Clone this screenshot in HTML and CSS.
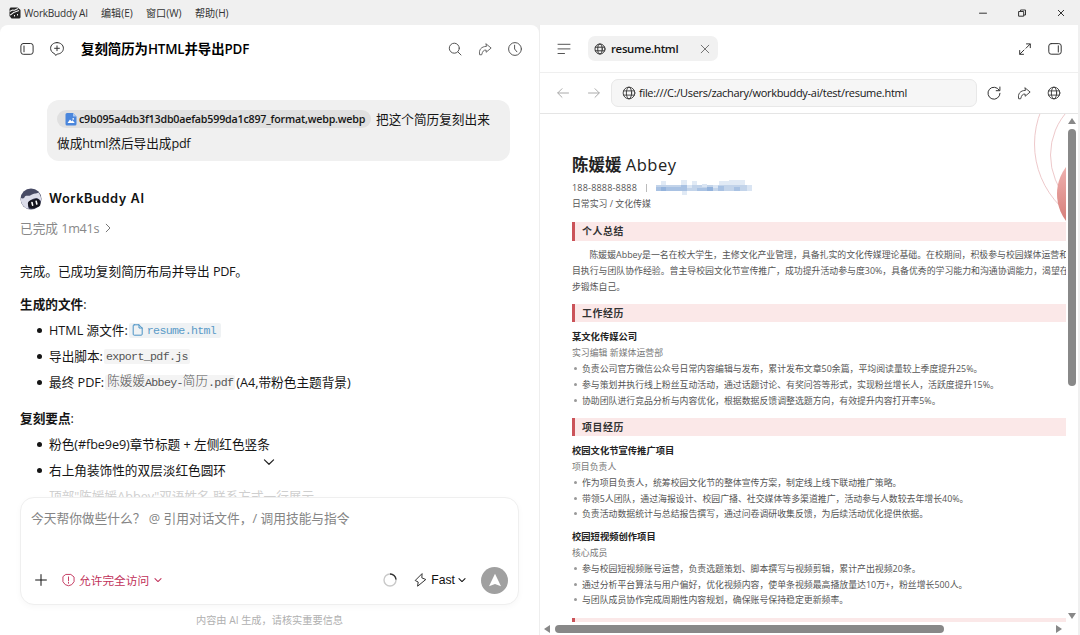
FILE: index.html
```html
<!DOCTYPE html>
<html lang="zh-CN">
<head>
<meta charset="utf-8">
<title>WorkBuddy AI</title>
<link rel="stylesheet" href="styles.css">
</head>
<body>
<svg width="0" height="0" class="defs">
  <symbol id="globe" viewBox="0 0 16 16"><circle cx="8" cy="8" r="6.7"/><ellipse cx="8" cy="8" rx="3" ry="6.7"/><path d="M1.8 5.6h12.4M1.8 10.4h12.4"/></symbol>
  <symbol id="share" viewBox="0 0 16 16"><path d="M9.3 2.2 15 6.900 9.3 11.700V9.2C6.2 9 5.200 10.800 4.200 14.600H1.900C.7 8.700 3.800 5.200 9.300 5z"/></symbol>
  <symbol id="down" viewBox="0 0 10 10"><path d="M1.200 3.200 5 6.900 8.800 3.200"/></symbol>
</svg>
<header class="titlebar">
  <svg class="logo" viewBox="0 0 12 12"><path d="M1.500.5h7L11.500 3v7.500l-1 1h-8L.5 9V2z" fill="#222"/><path d="M.7 4.500 3.500 3l2 .3L9 1.500M1 8c2-.2 2.500-2.500 5-3l4-1.500" stroke="#f0f0f0" stroke-width="1.100" fill="none"/><path d="M5.500 8v1.500M8.500 7v1.500" stroke="#f0f0f0" fill="none"/></svg>
  <span class="menu m1">WorkBuddy AI</span><span class="menu m2">编辑(E)</span><span class="menu m3">窗口(W)</span><span class="menu m4">帮助(H)</span>
  <span class="wincontrols">
    <svg class="ic" viewBox="0 0 10 10"><path d="M1.500 5.200h7"/></svg>
    <svg class="ic" viewBox="0 0 10 10"><path d="M2 3.500h4.700v4.700H2zM3.500 3.300V2h5v5H7"/></svg>
    <svg class="ic" viewBox="0 0 10 10"><path d="m2.300 2.300 5.400 5.400m0-5.400L2.300 7.700"/></svg>
  </span>
</header>
<div class="panes">
<section class="chat">
  <div class="chat-head">
    <svg class="ic i14" viewBox="0 0 14 14"><rect x=".9" y="1.500" width="12.200" height="10.800" rx="2.400"/><path d="M4 4v5.800"/></svg>
    <svg class="ic i14 new" viewBox="0 0 14 14"><path d="M7 .6c3.600 0 6.400 2.400 6.400 5.700S10.600 12 7.300 12L5.800 13.500 4.500 11.600C2.200 10.800.6 8.800.6 6.300.6 3 3.400.6 7 .6zM7 3.900v4.800M4.600 6.300h4.800"/></svg>
    <h1>复刻简历为<span>HTML</span>并导出<span>PDF</span></h1>
    <div class="head-actions">
      <svg class="ic i14 mid" viewBox="0 0 14 14"><circle cx="6.300" cy="6.200" r="5"/><path d="m10 10 3 3"/></svg>
      <svg class="ic i14 mid"><use href="#share"/></svg>
      <svg class="ic i14 mid" viewBox="0 0 14 14"><circle cx="7" cy="7" r="6.400"/><path d="M6.600 3.200V7l2.300 2.800"/></svg>
    </div>
  </div>
  <div class="bubble">
    <div class="bline"><span class="chip"><svg viewBox="0 0 12 13"><path d="M2 0h6l3.500 3.500V11a1.500 1.500 0 0 1-1.500 1.500H2A1.500 1.500 0 0 1 .5 11V1.500A1.500 1.500 0 0 1 2 0z" fill="#4a86dc"/><path d="M8 0v3.500h3.500z" fill="#a9c8f2"/><path d="M2.500 10 5 6.500l1.600 1.800 1-1L9.700 10z" fill="#fff"/><circle cx="8.200" cy="5.900" r=".8" fill="#fff"/></svg><b>c9b095a4db3f13db0aefab599da1c897_format,webp.webp</b></span><span>把这个简历复刻出来</span></div>
    <div class="bline">做成<span class="lat">html</span>然后导出成<span class="lat">pdf</span></div>
  </div>
  <div class="author">
    <svg viewBox="0 0 22 22"><circle cx="11" cy="11" r="10.500" fill="#484b65"/><path d="M.7 10c1.500 0 3 1.500 4.200-1.500C6.500 7 9 8.500 11 7c3-2 5-1 7.500-2.500 2 2.500 3 5 2.500 8.500-2-2-4-4-7-2.500-3.500 1-5.500 3-6 6-.2 1.500.2 3 .8 4.500C4 20 .5 15.500.7 10z" fill="#dcddea"/><rect x="8" y="11.500" width="12.500" height="8.500" rx="4" transform="rotate(-15 14 16)" fill="#15151f"/><path d="m12 14.500.6 2.600M16.200 13.400l.6 2.600" stroke="#fff" stroke-width="1.600" stroke-linecap="round"/></svg>
    <b>WorkBuddy AI</b>
  </div>
  <div class="status"><span>已完成 <span class="lat">1m41s</span></span><svg class="ic" viewBox="0 0 10 10"><path d="M3.200 1.200 7 5 3.200 8.800"/></svg></div>
  <div class="answer">
    <p class="lead">完成。已成功复刻简历布局并导出 <span class="lat">PDF</span>。</p>
    <p class="sub"><b>生成的文件</b>:</p>
    <ul>
      <li>HTML 源文件:<code class="link"><svg class="ic" viewBox="0 0 12 12"><path d="M2.200.8h4.800l3.200 3.200v6.200a1 1 0 0 1-1 1h-7a1 1 0 0 1-1-1V1.800a1 1 0 0 1 1-1zM7 .8V4h3.200"/></svg><i>resume.html</i></code></li>
      <li>导出脚本:<code>export_pdf.js</code></li>
      <li>最终 PDF:<code><i class="han">陈媛媛</i>Abbey-<i class="han">简历</i>.pdf</code>(A4,带粉色主题背景)</li>
    </ul>
    <p class="sub second"><b>复刻要点</b>:</p>
    <ul>
      <li>粉色<i class="hex">(#fbe9e9)</i>章节标题 + 左侧红色竖条</li>
      <li>右上角装饰性的双层淡红色圆环</li>
      <li class="faded">顶部"陈媛媛Abbey"双语姓名,联系方式一行展示</li>
    </ul>
    <svg class="ic jump" viewBox="0 0 10 10"><use href="#down"/></svg>
  </div>
  <div class="composer">
    <div class="prompt">今天帮你做些什么？ @ 引用对话文件，/ 调用技能与指令</div>
    <div class="tools">
      <svg class="ic plus" viewBox="0 0 12 12"><path d="M6 .6v10.800M.6 6h10.800"/></svg>
      <span class="access"><svg class="ic" viewBox="0 0 14 14"><path d="M4.500 1h5L13 3.800v5L10.500 12 7 13.200 3.500 12 1 8.800v-5zM7 3.700v4M7 9.300v1.200"/></svg>允许完全访问<svg class="ic dn"><use href="#down"/></svg></span>
      <svg class="spinner" viewBox="0 0 14 14"><circle cx="7" cy="7" r="6" stroke="#c9c9c9"/><path d="M7 1a6 6 0 0 1 6 5.500" stroke="#333"/></svg>
      <span class="fast"><svg class="ic" viewBox="0 0 13 14"><path d="M7.800.9 1.200 7.500 4.200 9l-.6 4.200L11.800 6.500 8.200 5z"/></svg>Fast<svg class="ic dn"><use href="#down"/></svg></span>
      <span class="send"><svg viewBox="0 0 14 14"><path d="M7 .8 13 13.200 7 11 1 13.200z"/></svg></span>
    </div>
  </div>
  <div class="notice">内容由 AI 生成，请核实重要信息</div>
</section>
<section class="viewer">
  <div class="tabs">
    <svg class="ic list" viewBox="0 0 14 14"><path d="M1 2.300h12M1 6.900h12M1 11.500h6.500"/></svg>
    <div class="tab"><svg class="ic"><use href="#globe"/></svg><b>resume.html</b><svg class="ic x" viewBox="0 0 10 10"><path d="m1.200 1.200 7.600 7.600m0-7.600L1.200 8.800"/></svg></div>
    <svg class="ic i14 grow" viewBox="0 0 14 14"><path d="M8.500 1.900h3.800v3.800M12.100 2.100 8 6.200M5.500 12.300H1.700V8.500M1.900 12.100 6 8"/></svg>
    <svg class="ic i14" viewBox="0 0 14 14"><rect x=".8" y="1.600" width="12.400" height="10.600" rx="2.400"/><path d="M10.300 3.800v6.200"/></svg>
  </div>
  <div class="address">
    <svg class="ic nav" viewBox="0 0 12 12"><path d="M11.500 6H.9M5 1.700.7 6 5 10.300"/></svg>
    <svg class="ic nav" viewBox="0 0 12 12"><path d="M.5 6h10.600M7 1.700 11.300 6 7 10.300"/></svg>
    <div class="url"><svg class="ic"><use href="#globe"/></svg><span>file:///C:/Users/zachary/workbuddy-ai/test/resume.html</span></div>
    <svg class="ic i14" viewBox="0 0 14 14"><path d="M12.200 4.200A6 6 0 1 0 13 7.300M12.900 1v3.700H9.200"/></svg>
    <svg class="ic i14"><use href="#share"/></svg>
    <svg class="ic i14"><use href="#globe"/></svg>
  </div>
  <div class="frame">
    <article class="resume">
      <h2><b>陈媛媛</b> <span>Abbey</span></h2>
      <div class="contact"><span>188-8888-8888</span><i></i>
        <svg class="mosaic" viewBox="0 0 97 16" shape-rendering="crispEdges"><path fill="#c3d4ea" d="M0 5h92v6H0z"/><path fill="#e1eaf5" d="M5 1h5v4H5zM25 0h6v5h-6zM36 1h5v4h-5zM63 1h10v4H63zM73 0h16v5H73zM26 11h5v4h-5z"/><path fill="#94b3dc" d="M5 7h5v4H5zM51 7h6v4h-6z"/><path fill="#a9c2e3" d="M0 7h5v4H0zM10 7h15v4H10zM25 5h6v6h-6zM41 8h10v3H41zM62 6h6v5h-6zM78 7h6v4h-6z"/><path fill="#dae5f3" d="M31 5h5v3h-5zM46 4h5v3h-5zM57 5h5v3h-5zM91 5h5v6h-5z"/></svg>
      </div>
      <div class="role">日常实习 / 文化传媒</div>
      <h3 class="first">个人总结</h3>
      <p class="about"><span class="indent"></span>陈媛媛Abbey是一名在校大学生，主修文化产业管理，具备扎实的文化传媒理论基础。在校期间，积极参与校园媒体运营和项<br>目执行与团队协作经验。曾主导校园文化节宣传推广，成功提升活动参与度30%，具备优秀的学习能力和沟通协调能力，渴望在新<br>步锻炼自己。</p>
      <h3>工作经历</h3>
      <h4>某文化传媒公司</h4>
      <div class="pos">实习编辑 新媒体运营部</div>
      <ul>
        <li>负责公司官方微信公众号日常内容编辑与发布，累计发布文章50余篇，平均阅读量较上季度提升25%。</li>
        <li>参与策划并执行线上粉丝互动活动，通过话题讨论、有奖问答等形式，实现粉丝增长人，活跃度提升15%。</li>
        <li>协助团队进行竞品分析与内容优化，根据数据反馈调整选题方向，有效提升内容打开率5%。</li>
      </ul>
      <h3>项目经历</h3>
      <h4>校园文化节宣传推广项目</h4>
      <div class="pos">项目负责人</div>
      <ul>
        <li>作为项目负责人，统筹校园文化节的整体宣传方案，制定线上线下联动推广策略。</li>
        <li>带领5人团队，通过海报设计、校园广播、社交媒体等多渠道推广，活动参与人数较去年增长40%。</li>
        <li>负责活动数据统计与总结报告撰写，通过问卷调研收集反馈，为后续活动优化提供依据。</li>
      </ul>
      <h4>校园短视频创作项目</h4>
      <div class="pos">核心成员</div>
      <ul>
        <li>参与校园短视频账号运营，负责选题策划、脚本撰写与视频剪辑，累计产出视频20条。</li>
        <li>通过分析平台算法与用户偏好，优化视频内容，使单条视频最高播放量达10万+，粉丝增长500人。</li>
        <li>与团队成员协作完成周期性内容规划，确保账号保持稳定更新频率。</li>
      </ul>
      <h3></h3>
      <svg class="rings" viewBox="0 0 34 110"><defs><linearGradient id="g" x2="0" y2="1"><stop offset=".2" stop-color="#eeb0ae"/><stop offset=".8" stop-color="#d67f7a"/></linearGradient></defs><g fill="none" stroke="#eec9cb"><circle cx="90.500" cy="30" r="88"/><circle cx="83.500" cy="41" r="65"/></g><circle cx="70" cy="80" r="45" fill="url(#g)"/></svg>
    </article>
    <div class="vbar"><svg viewBox="0 0 10 8"><path d="M5 1 9 7H1z"/></svg><i></i><svg class="end" viewBox="0 0 10 8"><path d="M5 7 1 1h8z"/></svg></div>
    <div class="hbar"><svg viewBox="0 0 8 10"><path d="M1 5 7 1v8z"/></svg><i></i><svg class="end" viewBox="0 0 8 10"><path d="M7 5 1 1v8z"/></svg></div>
  </div>
</section>
</div>
</body>
</html>
```
FILE: styles.css
```css
* { box-sizing: border-box; margin: 0; padding: 0; }
body { width: 1080px; height: 635px; overflow: hidden; background: #f0f0f0; color: #151515; font: 12.65px/26px "Open Sans", "Noto Sans CJK SC", sans-serif; display: flex; flex-direction: column; white-space: nowrap; }
svg { display: block; flex: none; }
i { font-style: normal; }
ul { list-style: none; }
.defs { position: absolute; }
.ic { fill: none; stroke: #333; stroke-width: 1; stroke-linecap: round; stroke-linejoin: round; }
.i14 { width: 14px; height: 14px; }
.lat { letter-spacing: -.3px; }

.titlebar { height: 25px; flex: none; display: flex; align-items: center; padding: 0 14px 0 9px; font-size: 10.1px; color: #333; }
.logo { width: 12px; height: 12px; margin-right: 3px; }
.menu { line-height: 22px; }
.m1 { width: 77px; letter-spacing: -.25px; }
.m2 { width: 45px; }
.m3 { width: 49px; }
.wincontrols { margin-left: auto; display: flex; gap: 29px; }
.wincontrols svg { width: 10px; height: 10px; }

.panes { flex: 1; min-height: 0; display: flex; }
.chat { width: 539px; background: #fff; border-radius: 8px 8px 0 0; display: flex; flex-direction: column; }
.chat-head { height: 48px; flex: none; display: flex; align-items: center; padding: 0 17px 0 20px; }
.chat-head .new { margin-left: 16px; }
.chat-head h1 { font-size: 13.4px; font-weight: 600; margin-left: 17px; color: #000; }
.chat-head h1 span { letter-spacing: -.2px; }
.head-actions { display: flex; gap: 16px; margin-left: auto; }
.mid { stroke: #555; }
.bubble { width: 463px; height: 61px; flex: none; margin: 27px 0 0 47px; border-radius: 12px; background: #f0f0f0; padding: 7px 10px; }
.bline { height: 24px; line-height: 24px; display: flex; align-items: center; }
.chip { width: 314px; height: 18px; border-radius: 9px; background: #e0e0e0; display: flex; align-items: center; padding-left: 8px; margin-right: 5px; line-height: 17px; }
.chip svg { width: 12px; height: 13px; margin-right: 2px; }
.chip b { font-size: 10.7px; font-weight: 600; letter-spacing: -.2px; }
.author { display: flex; align-items: center; height: 22px; flex: none; margin: 27px 0 0 20px; gap: 7px; }
.author svg { width: 22px; height: 22px; }
.author b { font: 600 12.800px/22px Inter, sans-serif; letter-spacing: .57px; color: #111; }
.status { display: flex; align-items: center; gap: 4px; height: 20px; line-height: 20px; flex: none; margin: 8px 0 0 20px; color: #888; }
.status svg { width: 10px; height: 10px; stroke: #777; }

.answer { position: relative; height: 259px; flex: none; overflow: hidden; padding: 20px 0 0 20px; }
.lead { margin-bottom: 7px; }
.sub b { font-weight: 700; }
.sub.second { margin-top: 10px; }
.answer li { height: 26px; padding-left: 29px; position: relative; display: flex; align-items: center; }
.answer li::before { content: ""; position: absolute; left: 17px; top: 11px; width: 5px; height: 5px; border-radius: 50%; background: #151515; }
.hex { letter-spacing: -.1px; }
.answer code { font: 11.600px/15px "Liberation Mono", "Noto Sans CJK SC", monospace; background: #f4f4f4; color: #555; height: 15px; padding: 0 2px; border-radius: 2px; display: flex; align-items: center; letter-spacing: -.65px; margin: 0 1px; }
.answer code .han { font-size: 12.600px; font-weight: 300; letter-spacing: 0; }
.answer code.link { color: #5a9bc8; background: #eff2f4; padding: 0 5px 0 3px; }
.link svg { width: 12px; height: 12px; stroke: #4b93c6; margin-right: 3px; }
.answer .faded { color: #cfcfcf; }
.answer .faded::before { display: none; }
.jump { position: absolute; left: 263px; top: 218px; width: 12px; height: 12px; stroke: #222; }

.composer { width: 499px; height: 108px; flex: none; margin-left: 20px; border: 1px solid #efefef; border-radius: 14px; background: #fff; box-shadow: 0 2px 6px rgba(0,0,0,.03); padding: 8px 10px 10px; display: flex; flex-direction: column; justify-content: space-between; }
.prompt { color: #858585; line-height: 24px; font-size: 12.720px; }
.tools { display: flex; align-items: center; height: 28px; }
.plus { width: 12px; height: 12px; margin: 0 15px 0 4px; stroke: #111; }
.access { display: flex; align-items: center; color: #c1315a; font-size: 11.700px; margin-right: auto; }
.access svg { width: 13px; height: 14px; stroke: #c1315a; margin-right: 4px; }
.tools .dn { width: 8px; height: 8px; margin: 0 0 0 5px; stroke-width: 1.300; }
.spinner { width: 14px; height: 14px; fill: none; stroke-width: 1.400; margin-right: 17px; }
.fast { display: flex; align-items: center; font: 12.200px/20px "Liberation Sans", sans-serif; color: #111; margin-right: 15px; }
.fast svg { width: 13px; height: 14px; margin-right: 4px; }
.tools .fast .dn { margin-left: 3px; stroke: #111; }
.send { width: 27px; height: 27px; border-radius: 50%; background: #a0a0a0; display: flex; align-items: center; justify-content: center; }
.send svg { width: 14px; height: 14px; fill: #fff; }
.notice { text-align: center; color: #b0b0b0; font-size: 10.200px; line-height: 30px; }

.viewer { width: 539px; border-left: 1px solid #eee; background: #fff; display: flex; flex-direction: column; }
.tabs { height: 48px; flex: none; display: flex; align-items: center; padding: 0 16px 0 17px; border-bottom: 1px solid #efefef; }
.list { width: 14px; height: 14px; stroke: #555; }
.tab { width: 130px; height: 25px; border-radius: 7px; background: #f1f1f1; margin-left: 17px; display: flex; align-items: center; padding: 0 8px 0 6px; }
.tab svg { width: 12px; height: 12px; stroke-width: 1.300; margin-right: 5px; }
.tab b { font: 600 11.400px/24px "Open Sans", sans-serif; letter-spacing: -.3px; }
.tab .x { width: 10px; height: 10px; margin: 0 0 0 auto; stroke: #666; stroke-width: .9; }
.grow { margin-left: auto; margin-right: 16px; }
.address { height: 41px; flex: none; display: flex; align-items: center; padding: 0 16px 0 17px; border-bottom: 1px solid #e5e5e5; }
.address .nav { width: 12px; height: 12px; stroke: #aaa; margin-right: 19px; }
.address .nav + .nav { margin-right: 11px; }
.url { width: 366px; height: 28px; border-radius: 7px; border: 1px solid #e8e8e8; background: #f6f6f6; display: flex; align-items: center; font-size: 11px; letter-spacing: -.3px; padding-left: 10px; margin-right: 10px; gap: 3px; }
.url svg { width: 14px; height: 14px; }
.address .i14 + .i14 { margin-left: 16px; }

.frame { flex: 1; min-height: 0; display: grid; grid-template: 508px 13px / 526px 12px; }
.resume { position: relative; overflow: hidden; padding: 38px 0 0 32px; font-size: 8.900px; line-height: 15.600px; color: #555; }
.resume h2 { font-size: 16.500px; line-height: 26px; height: 26px; font-weight: 400; color: #222; }
.resume h2 b { font-weight: 700; }
.resume h2 span { letter-spacing: .5px; }
.contact { display: flex; align-items: center; height: 16px; margin-top: 2px; font-size: 9px; letter-spacing: .2px; }
.contact i { width: 1px; height: 8px; background: #bbb; margin: 0 9px 0 9px; }
.mosaic { width: 97px; height: 16px; }
.rings { position: absolute; right: 0; top: 0; width: 34px; height: 110px; }
.resume h3 { height: 18.400px; line-height: 19.500px; border-left: 3px solid #cb5359; background: #fbe8e8; padding-left: 7px; font-size: 9.900px; letter-spacing: .6px; color: #333; margin-top: 9.700px; }
.resume h3.first { margin-top: 10.600px; }
.about { margin-top: 6.800px; }
.indent { display: inline-block; width: 17.500px; }
.resume h4 { font-size: 9.300px; line-height: 15.600px; color: #222; margin-top: 6.900px; }
.pos { color: #777; }
.resume ul { margin-top: 1px; }
.resume li { height: 15.600px; padding-left: 10px; position: relative; }
.resume li::before { content: ""; position: absolute; left: 2px; top: 6px; width: 3px; height: 3px; border-radius: 50%; background: #999; }
.vbar, .hbar { display: flex; align-items: center; }
.vbar { flex-direction: column; padding: 3px 0 2px; }
.vbar svg { width: 10px; height: 8px; fill: #888; }
.vbar i { width: 8px; height: 257px; border-radius: 4px; background: #888; margin-top: 4px; }
.vbar .end { margin-top: auto; }
.hbar { padding: 0 3px; }
.hbar svg { width: 8px; height: 10px; fill: #888; }
.hbar i { width: 389px; height: 8px; border-radius: 4px; background: #888; margin-left: 4px; }
.hbar .end { margin-left: auto; }
```
